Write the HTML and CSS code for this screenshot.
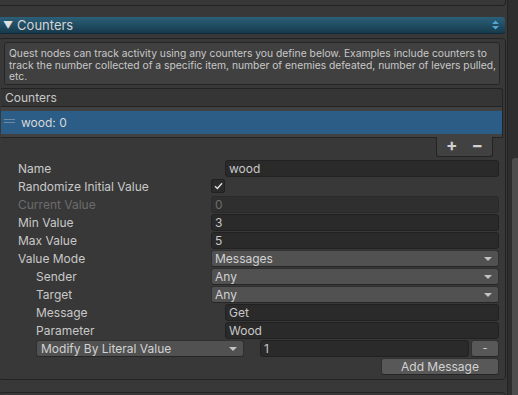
FILE: index.html
```html
<!DOCTYPE html>
<html>
<head>
<meta charset="utf-8">
<link rel="stylesheet" href="styles.css">
</head>
<body>
<div class="page">
  <div class="main">
    <div class="stub-top"></div>
    <div class="foldout">
      <span class="tri">&#9660;</span><span class="fold-title">Counters</span>
      <svg class="updown" width="9" height="12" viewBox="0 0 9 12"><path d="M1 5 L4.5 1.5 L8 5 Z M1 7 L4.5 10.5 L8 7 Z" fill="#4fa6d3"/></svg>
    </div>
    <div class="box">
      <div class="help">Quest nodes can track activity using any counters you define below. Examples include counters to track the number collected of a specific item, number of enemies defeated, number of levers pulled, etc.</div>
      <div class="list">
        <div class="list-head">Counters</div>
        <div class="list-body">
          <div class="row-sel"><span class="handle"></span><span>wood: 0</span></div>
        </div>
      </div>
      <div class="list-foot"><div class="pm"><span class="plus">+</span><span class="minus">&minus;</span></div></div>
      <div class="form">
        <div class="frow"><span class="lbl">Name</span><span class="fld txt name">wood</span></div>
        <div class="frow"><span class="lbl">Randomize Initial Value</span><span class="chk"><svg width="9" height="8" viewBox="0 0 9 8"><path d="M1 4.2 L3.4 6.5 L8 1.3" stroke="#e0e0e0" stroke-width="1.4" fill="none"/></svg></span></div>
        <div class="frow"><span class="lbl dis">Current Value</span><span class="fld txt disf">0</span></div>
        <div class="frow"><span class="lbl">Min Value</span><span class="fld txt">3</span></div>
        <div class="frow"><span class="lbl">Max Value</span><span class="fld txt">5</span></div>
        <div class="frow"><span class="lbl">Value Mode</span><span class="fld drop">Messages<i class="arr"></i></span></div>
        <div class="frow ind"><span class="lbl">Sender</span><span class="fld drop sub">Any<i class="arr"></i></span></div>
        <div class="frow ind"><span class="lbl">Target</span><span class="fld drop sub">Any<i class="arr"></i></span></div>
        <div class="frow ind"><span class="lbl">Message</span><span class="fld txt msg">Get</span></div>
        <div class="frow ind"><span class="lbl">Parameter</span><span class="fld txt msg">Wood</span></div>
        <div class="frow ind mod">
          <span class="fld drop modd">Modify By Literal Value<i class="arr"></i></span>
          <span class="fld txt one">1</span>
          <span class="btn small">-</span>
        </div>
        <div class="addrow"><span class="btn add">Add Message</span></div>
      </div>
    </div>
    <div class="stub-bottom"></div>
  </div>
  <div class="scroll"><div class="thumb"></div></div>
</div>
</body>
</html>
```
FILE: styles.css
```css
* { box-sizing: border-box; }
html, body { margin: 0; padding: 0; }
body {
  background: #383838;
  font-family: Inter, "Noto Sans", sans-serif;
  color: #c8c8c8;
  font-size: 12px;
  width: 518px;
  height: 395px;
  overflow: hidden;
}
.page { display: flex; width: 518px; height: 395px; }
.main { width: 507px; flex: none; display: flex; flex-direction: column; }
.scroll {
  flex: 1;
  background: #2e2e2e;
  border-left: 1px solid #232323;
  display: flex;
  justify-content: flex-end;
  padding-top: 158px;
}
.thumb { width: 6px; height: 237px; background: #4d4d4d; border-radius: 3px 0 0 0; }
.stub-top {
  height: 6px;
  margin-left: -2px;
  margin-right: 1px;
  border: 1px solid #232323;
  border-top: none;
  border-radius: 0 0 4px 4px;
  background: #383838;
  flex: none;
}
.foldout {
  margin-top: 11px;
  height: 17px;
  margin-right: 2px;
  background: linear-gradient(#2b6079, #163a4c);
  border-bottom: 1px solid #0e2a38;
  border-radius: 0 3px 3px 0;
  display: flex;
  align-items: center;
  color: #d4d4d4;
  font-size: 13px;
  flex: none;
}
.tri { font-size: 10px; margin-left: 3px; margin-right: 4px; color: #e0e0e0; }
.fold-title { flex: 1; }
.updown { margin-right: 5px; }
.box {
  margin-top: 4px;
  margin-left: -2px;
  margin-right: 1px;
  height: 342px;
  border: 1px solid #232323;
  border-radius: 4px;
  background: #383838;
  padding: 3px 0 0 2px;
  display: flex;
  flex-direction: column;
  flex: none;
}
.help {
  margin: 0 5px 0 3px;
  background: #404040;
  border: 1px solid #262626;
  border-radius: 3px;
  padding: 5px 2px 0 4px;
  font-size: 10.3px;
  line-height: 11.6px;
  color: #c8c8c8;
  height: 43px;
}
.list { margin-top: 3px; margin-right: 2px; }
.list-head {
  height: 19px;
  background: #353535;
  border: 1px solid #232323;
  border-left: none;
  border-radius: 0 3px 0 0;
  padding-left: 4px;
  display: flex;
  align-items: center;
  font-size: 12px;
}
.list-body {
  background: #414141;
  border-right: 1px solid #232323;
  border-bottom: 1px solid #232323;
  padding: 4px 0 3px 0;
}
.row-sel {
  height: 23px;
  background: #2c5d87;
  display: flex;
  align-items: center;
  color: #d8d8d8;
}
.handle {
  width: 11px;
  height: 4px;
  border-top: 1px solid #6f8ba3;
  border-bottom: 1px solid #6f8ba3;
  margin: 0 6px 4px 3px;
}
.list-foot { display: flex; justify-content: flex-end; margin-right: 12px; height: 20px; }
.pm {
  width: 57px;
  height: 20px;
  margin-top: -1px;
  background: #414141;
  border: 1px solid #232323;
  border-top: none;
  border-radius: 0 0 3px 3px;
  display: flex;
  justify-content: center;
  gap: 14px;
  font-size: 17px;
  font-weight: bold;
  color: #d0d0d0;
  line-height: 17px;
}
.form { margin-top: 1px; padding-left: 17px; padding-right: 6px; }
.frow { display: flex; align-items: center; height: 18px; }
.frow.ind { padding-left: 18px; }
.lbl { width: 193px; flex: none; }
.frow.ind .lbl { width: 175px; }
.lbl.dis { color: #6c6c6c; }
.fld {
  flex: 1;
  height: 17px;
  border-radius: 3px;
  display: flex;
  align-items: center;
  padding-left: 3px;
}
.txt { background: #2a2a2a; border: 1px solid #212121; }
.disf { background: #2f2f2f; color: #6c6c6c; border-color: #2a2a2a; }
.name { margin-left: 14px; }
.chk {
  width: 14px;
  height: 14px;
  background: #2a2a2a;
  border: 1px solid #212121;
  border-radius: 2px;
  display: flex;
  align-items: center;
  justify-content: center;
}
.drop {
  background: #515151;
  border: 1px solid #303030;
  border-bottom-color: #262626;
  position: relative;
  color: #d2d2d2;
}
.msg { margin-left: 14px; }
.arr {
  position: absolute;
  right: 6px;
  top: 6px;
  width: 0;
  height: 0;
  border-left: 4px solid transparent;
  border-right: 4px solid transparent;
  border-top: 4px solid #c4c4c4;
}
.mod .modd { flex: none; width: 208px; padding-left: 4px; }
.one { margin-left: 16px; }
.btn {
  background: #585858;
  border: 1px solid #303030;
  border-bottom-color: #242424;
  border-radius: 3px;
  color: #d2d2d2;
  display: flex;
  align-items: center;
  justify-content: center;
  height: 17px;
}
.btn.small { width: 28px; margin-left: 2px; font-size: 11px; }
.addrow { display: flex; justify-content: flex-end; margin-top: 1px; }
.btn.add { width: 118px; height: 17px; }
.stub-bottom {
  margin-top: 12px;
  height: 10px;
  margin-left: -2px;
  margin-right: 1px;
  border: 1px solid #232323;
  border-radius: 4px 4px 0 0;
  flex: none;
}
```
